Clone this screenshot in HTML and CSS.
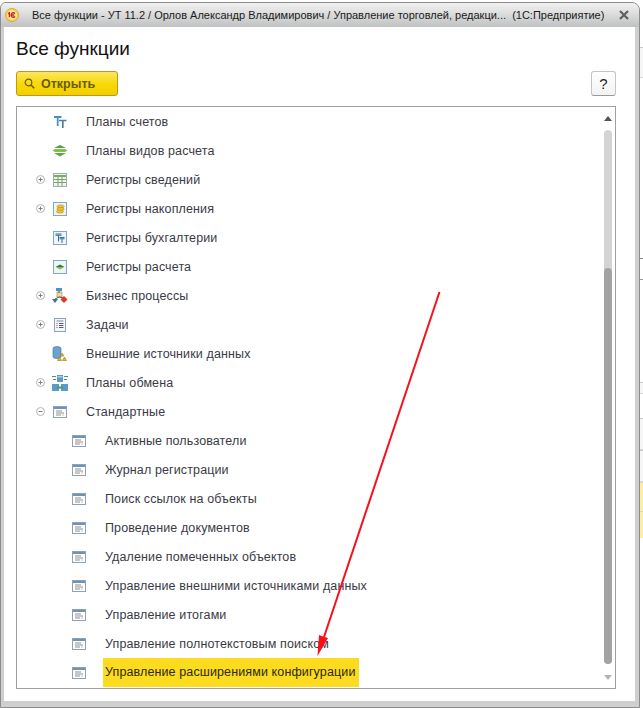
FILE: index.html
```html
<!DOCTYPE html>
<html lang="ru">
<head>
<meta charset="utf-8">
<title>Все функции</title>
<link rel="stylesheet" href="styles.css">
</head>
<body>
<svg width="0" height="0" class="defs">
  <defs>
    <symbol id="std" viewBox="0 0 14 14">
      <rect x=".5" y="1.5" width="13" height="11" fill="#fff" stroke="#8ba3b8"/>
      <rect x="1" y="2" width="12" height="2" fill="#6f93b3"/>
      <path d="M3 6h6M3 8h8M3 10h5" stroke="#8f8f8f"/>
      <path d="M9 10h2" stroke="#c4c4c4"/>
    </symbol>
    <symbol id="plus" viewBox="0 0 9 9">
      <circle cx="4.5" cy="4.5" r="4" fill="#fff" stroke="#b4b4b4"/>
      <path d="M2.5 4.5h4M4.5 2.5v4" stroke="#808080"/>
    </symbol>
    <symbol id="minus" viewBox="0 0 9 9">
      <circle cx="4.5" cy="4.5" r="4" fill="#fff" stroke="#b4b4b4"/>
      <path d="M2.5 4.5h4" stroke="#808080"/>
    </symbol>
  </defs>
</svg>
<div class="window">
  <header class="titlebar">
    <svg class="logo" width="14" height="14" viewBox="0 0 16 16">
      <circle cx="8" cy="8" r="7.5" fill="#f6cf3d" stroke="#d9a441"/>
      <circle cx="8" cy="8" r="5.6" fill="#fbe9a0"/>
      <path d="M3.5 6.500 5 5.600V10.500M11.500 6.200A2.600 2.600 0 1 0 11.500 9.800M6.500 8h4" fill="none" stroke="#d0201a" stroke-width="1.500"/>
    </svg>
    <span class="title">Все функции - УТ 11.2 / Орлов Александр Владимирович / Управление торговлей, редакци...  (1С:Предприятие)</span>
    <svg class="close" width="10" height="10" viewBox="0 0 10 10"><path d="M1 1l8 8M9 1l-8 8" stroke="#5f5f5f" stroke-width="2.200"/></svg>
  </header>
  <main class="body">
    <h1 class="heading">Все функции</h1>
    <div class="toolbar">
      <button class="open">
        <svg width="11" height="11" viewBox="0 0 11 11"><circle cx="4.500" cy="4.500" r="3.300" fill="none" stroke="#6f5a10" stroke-width="1.200"/><path d="M7 7l3.200 3.200" stroke="#6f5a10" stroke-width="1.500"/></svg>
        <span>Открыть</span>
      </button>
      <button class="help">?</button>
    </div>
    <section class="list">
      <ul class="rows">
        <li class="row"><span class="tog"></span>
          <svg class="ico" viewBox="0 0 14 14"><path d="M1 2h7.500M4.700 2V11" fill="none" stroke="#4f8fc0" stroke-width="1.800"/><path d="M6 5.500h7.500M9.800 5.500V13" fill="none" stroke="#4a7ea8" stroke-width="1.700"/></svg>
          <span class="lbl">Планы счетов</span></li>
        <li class="row"><span class="tog"></span>
          <svg class="ico wide" viewBox="0 0 16 12"><path d="M8 0l6 3H2z" fill="#4f9e48"/><path d="M.500 5.500 3 4h10l2.500 1.500L13 7H3z" fill="#7fc04e"/><path d="M2 8h12l-6 3.500z" fill="#5aa848"/></svg>
          <span class="lbl">Планы видов расчета</span></li>
        <li class="row"><svg class="tog"><use href="#plus"/></svg>
          <svg class="ico" viewBox="0 0 14 14"><rect x=".5" y=".5" width="13" height="13" fill="#f1f5e6" stroke="#9bb0b5"/><path d="M1 3h12" stroke="#7cab63" stroke-width="2"/><path d="M1 6.500h12M1 9.500h12M5 4v9M9 4v9" stroke="#7f9c78"/></svg>
          <span class="lbl">Регистры сведений</span></li>
        <li class="row"><svg class="tog"><use href="#plus"/></svg>
          <svg class="ico" viewBox="0 0 14 14"><rect x=".5" y=".5" width="13" height="13" fill="#eef4f9" stroke="#86a7c4"/><ellipse cx="7.500" cy="4.500" rx="3.600" ry="1.600" fill="#f2c230" stroke="#b98a18" stroke-width=".6"/><ellipse cx="7.500" cy="7" rx="3.600" ry="1.600" fill="#f2c230" stroke="#b98a18" stroke-width=".6"/><ellipse cx="7" cy="9.500" rx="3.600" ry="1.600" fill="#f2c230" stroke="#b98a18" stroke-width=".6"/></svg>
          <span class="lbl">Регистры накопления</span></li>
        <li class="row"><span class="tog"></span>
          <svg class="ico" viewBox="0 0 14 14"><rect x=".5" y=".5" width="13" height="13" fill="#eef4f9" stroke="#86a7c4"/><path d="M2.500 3h6M2.500 4.300h6M5.500 4.300V10.500M6.500 6.500h5M6.500 7.800h5M9 7.800V12" fill="none" stroke="#2f6ea5"/></svg>
          <span class="lbl">Регистры бухгалтерии</span></li>
        <li class="row"><span class="tog"></span>
          <svg class="ico" viewBox="0 0 14 14"><rect x=".5" y=".5" width="13" height="13" fill="#eef4f9" stroke="#86a7c4"/><path d="M7 4.500l4.500 2.500H2.500z" fill="#2f7d2f"/><path d="M2.500 7h9L7 9.500z" fill="#86bb4e"/></svg>
          <span class="lbl">Регистры расчета</span></li>
        <li class="row"><svg class="tog"><use href="#plus"/></svg>
          <svg class="ico wide" viewBox="0 0 16 16"><rect x="4" y="0" width="6" height="3" fill="#4d93c9"/><rect x="5" y="4" width="5" height="5" fill="#f0d8a8" stroke="#a87f48" stroke-width=".6"/><path d="M7 3v2M7 9L3 11M7 9l5 1" stroke="#555"/><path d="M0 11h6l-3 4z" fill="#3b6f9c"/><path d="M12 8l3.500 3.500L12 15l-3.500-3.500z" fill="#dd3a25"/></svg>
          <span class="lbl">Бизнес процессы</span></li>
        <li class="row"><svg class="tog"><use href="#plus"/></svg>
          <svg class="ico" viewBox="0 0 14 14"><rect x="1.500" y=".5" width="11" height="13" fill="#f5f7fa" stroke="#8aa3bd"/><path d="M3.500 3h7" stroke="#8a8a8a"/><path d="M3.500 5.500h1M3.500 7.500h1M3.500 9.500h1" stroke="#c0392b"/><path d="M6 5.500h4.500M6 7.500h4.500M6 9.500h4.500" stroke="#555a8a"/></svg>
          <span class="lbl">Задачи</span></li>
        <li class="row"><span class="tog"></span>
          <svg class="ico wide" viewBox="0 0 16 16"><path d="M1 2.500a4 2 0 0 1 8 0v8a4 2 0 0 1-8 0z" fill="#6aa3d0" stroke="#3f6f9a" stroke-width=".6"/><path d="M10 7l2 3H8z M7.500 11l2 3.500h-4z M12.500 11l2 3.500h-4z" fill="#eab52f" stroke="#a37510" stroke-width=".6"/></svg>
          <span class="lbl">Внешние источники данных</span></li>
        <li class="row"><svg class="tog"><use href="#plus"/></svg>
          <svg class="ico wide" viewBox="0 0 16 16"><rect x="5" y="0" width="6" height="7" fill="#5b9bcb"/><rect x="5.500" y="1" width="5" height="1.500" fill="#a9cfe8"/><rect x="0" y="9" width="7" height="7" fill="#5b9bcb"/><rect x="9" y="9" width="7" height="7" fill="#5b9bcb"/><path d="M0 1h4v1H0zM12 1h4v1h-4zM1 4h3v1H1zM12 4h3v1h-3z" fill="#4aa04a"/><path d="M5 12.500h6" stroke="#4aa04a" stroke-width="2"/></svg>
          <span class="lbl">Планы обмена</span></li>
        <li class="row"><svg class="tog"><use href="#minus"/></svg>
          <svg class="ico"><use href="#std"/></svg>
          <span class="lbl">Стандартные</span></li>
        <li class="row sub"><svg class="ico"><use href="#std"/></svg><span class="lbl">Активные пользователи</span></li>
        <li class="row sub"><svg class="ico"><use href="#std"/></svg><span class="lbl">Журнал регистрации</span></li>
        <li class="row sub"><svg class="ico"><use href="#std"/></svg><span class="lbl">Поиск ссылок на объекты</span></li>
        <li class="row sub"><svg class="ico"><use href="#std"/></svg><span class="lbl">Проведение документов</span></li>
        <li class="row sub"><svg class="ico"><use href="#std"/></svg><span class="lbl">Удаление помеченных объектов</span></li>
        <li class="row sub"><svg class="ico"><use href="#std"/></svg><span class="lbl">Управление внешними источниками данных</span></li>
        <li class="row sub"><svg class="ico"><use href="#std"/></svg><span class="lbl">Управление итогами</span></li>
        <li class="row sub"><svg class="ico"><use href="#std"/></svg><span class="lbl">Управление полнотекстовым поиском</span></li>
        <li class="row sub"><svg class="ico"><use href="#std"/></svg><span class="lbl selected">Управление расширениями конфигурации</span></li>
      </ul>
      <div class="scroll">
        <span class="arrow up"></span>
        <div class="track"><div class="thumb"></div></div>
        <span class="arrow down"></span>
      </div>
    </section>
  </main>
</div>
<aside class="side">
  <div class="frag plain h31"></div>
  <div class="gap180"></div>
  <div class="frag dark h22"></div>
  <div class="gap102"></div>
  <div class="frag plain h12"></div>
  <div class="gap24"></div>
  <div class="frag plain h32"></div>
  <div class="frag plain h32"></div>
  <div class="frag yellow h29"></div>
  <div class="frag yellow h27"></div>
</aside>
<svg class="annotation" width="643" height="708" viewBox="0 0 643 708">
  <path d="M439.500 292 324 637" fill="none" stroke="#f5101c" stroke-width="2"/>
  <path d="M317.500 656l1.500-21 4 1.500 5 1.500z" fill="#f5101c"/>
</svg>
</body>
</html>
```
FILE: styles.css
```css
html, body { margin: 0; padding: 0; background: #fff; }
body { width: 643px; height: 708px; position: relative; overflow: hidden; display: flex; font-family: "Liberation Sans", Arial, sans-serif; }
.defs { position: absolute; height: 0; }
.window {
  box-sizing: border-box;
  width: 640px;
  height: 706px;
  flex: none;
  margin-top: 2px;
  border: 1px solid #8c8c8c;
  border-radius: 6px 8px 0 0;
  background: #cfcfcf;
  display: flex;
  flex-direction: column;
}
.titlebar {
  height: 24px;
  flex: none;
  display: flex;
  align-items: center;
  padding: 0 7px 0 4px;
  background: linear-gradient(#f2f2f2, #dcdcdc 45%, #bfc1c2);
  border-radius: 5px 7px 0 0;
}
.logo { flex: none; }
.title { margin-left: 13px; font-size: 11px; color: #1a1a1a; white-space: pre; flex: 1; }
.close { flex: none; margin-right: 3px; }
.body {
  flex: 1;
  margin: 0 4px 6px 3px;
  background: #fff;
  padding: 0 19px 12px 12px;
  display: flex;
  flex-direction: column;
  min-height: 0;
}
.heading { margin: 10px 0 0; font-size: 19px; line-height: 24px; font-weight: 400; color: #111; }
.toolbar { display: flex; justify-content: space-between; align-items: flex-start; margin-top: 10px; height: 26px; }
.open {
  box-sizing: border-box;
  width: 102px;
  height: 25px;
  display: flex;
  align-items: center;
  gap: 6px;
  padding: 0 0 0 7px;
  border: 1px solid #bb9a18;
  border-radius: 3px;
  background: linear-gradient(#fbe566, #f7d900 55%, #f2cf00);
  font: 700 12.500px "Liberation Sans", Arial, sans-serif;
  color: #6b5a10;
}
.help {
  box-sizing: border-box;
  width: 25px;
  height: 25px;
  padding: 0;
  border: 1px solid #c4c4c4;
  border-bottom-color: #999;
  border-radius: 3px;
  background: linear-gradient(#fff, #f3f3f3);
  font: 400 15px "Liberation Sans", Arial, sans-serif;
  color: #222;
}
.list {
  flex: 1;
  min-height: 0;
  margin-top: 9px;
  border: 1px solid #a0a0a0;
  display: flex;
}
.rows { flex: 1; margin: 0; padding: 0; list-style: none; }
.row { height: 29px; display: flex; align-items: center; padding-left: 19px; font-size: 12.500px; color: #3a3a46; }
.row.sub { padding-left: 55px; }
.tog { width: 9px; height: 9px; flex: none; display: block; }
.ico { width: 14px; height: 14px; flex: none; margin-left: 8px; }
.ico.wide { width: 16px; height: 16px; margin-left: 7px; margin-right: -1px; }
.row.sub .ico { margin-left: 0; }
.lbl { margin-left: 19px; letter-spacing: .12px; }
.row.sub .lbl { margin-left: 19px; }
.row.sub .lbl.selected { margin-left: 17px; padding: 0 4px 0 2px; height: 29px; line-height: 29px; background: #fddb1e; color: #2c2a10; }
.scroll { width: 8px; flex: none; margin-right: 3px; display: flex; flex-direction: column; align-items: center; padding-top: 9px; }
.arrow { width: 0; height: 0; border-left: 4px solid transparent; border-right: 4px solid transparent; flex: none; }
.arrow.up { border-bottom: 5px solid #555; }
.arrow.down { border-top: 5px solid #b5b5b5; margin-top: 11px; }
.track { width: 8px; height: 534px; margin-top: 9px; background: #d4d4d4; border-radius: 4px; display: flex; flex-direction: column; justify-content: flex-end; flex: none; }
.thumb { height: 396px; background: #a3a3a3; border-radius: 4px; }
.side { width: 3px; flex: none; padding-top: 47px; display: flex; flex-direction: column; }
.frag { box-sizing: border-box; border-top: 1px solid #c8c8c8; flex: none; }
.frag.plain { background: #f6f6f6; border-bottom: 1px solid #d8d8d8; }
.frag.dark { background: #fff; border-top-color: #888; border-bottom: 1px solid #999; }
.frag.yellow { background: #fbeea6; border-top-color: #e0d9a8; }
.h12 { height: 12px; }
.h22 { height: 22px; }
.h27 { height: 27px; }
.h29 { height: 29px; }
.h31 { height: 31px; }
.h32 { height: 32px; }
.gap24 { height: 24px; flex: none; }
.gap102 { height: 102px; flex: none; }
.gap180 { height: 180px; flex: none; }
.annotation { position: absolute; left: 0; top: 0; pointer-events: none; }
```
